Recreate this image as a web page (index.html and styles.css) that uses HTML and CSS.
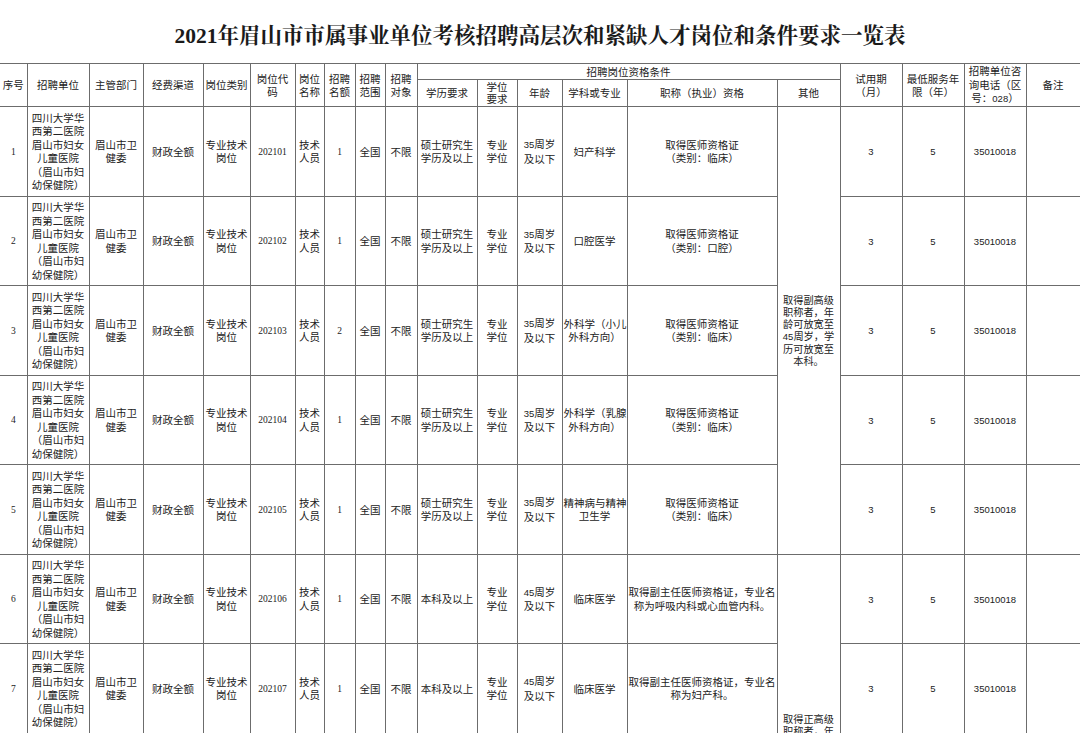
FILE: index.html
```html
<!DOCTYPE html>
<html lang="zh-CN">
<head>
<meta charset="utf-8">
<title>2021年眉山市市属事业单位考核招聘高层次和紧缺人才岗位和条件要求一览表</title>
<link rel="stylesheet" href="styles.css">
</head>
<body>
<div class="title">2021年眉山市市属事业单位考核招聘高层次和紧缺人才岗位和条件要求一览表</div>
<table class="sheet">
  <colgroup>
    <col class="c-no"><col class="c-unit"><col class="c-dept"><col class="c-fund"><col class="c-type">
    <col class="c-code"><col class="c-name"><col class="c-quota"><col class="c-range"><col class="c-target">
    <col class="c-edu"><col class="c-degree"><col class="c-age"><col class="c-major"><col class="c-title">
    <col class="c-other"><col class="c-trial"><col class="c-serve"><col class="c-tel"><col class="c-note">
  </colgroup>
  <thead>
    <tr class="h1">
      <th rowspan="2" class="first">序号</th>
      <th rowspan="2">招聘单位</th>
      <th rowspan="2">主管部门</th>
      <th rowspan="2">经费渠道</th>
      <th rowspan="2">岗位类别</th>
      <th rowspan="2">岗位代<br>码</th>
      <th rowspan="2">岗位<br>名称</th>
      <th rowspan="2">招聘<br>名额</th>
      <th rowspan="2">招聘<br>范围</th>
      <th rowspan="2">招聘<br>对象</th>
      <th colspan="6">招聘岗位资格条件</th>
      <th rowspan="2">试用期<br>（月）</th>
      <th rowspan="2">最低服务年<br>限（年）</th>
      <th rowspan="2">招聘单位咨<br>询电话（区<br>号：<span class="nd">028</span>）</th>
      <th rowspan="2">备注</th>
    </tr>
    <tr class="h2">
      <th>学历要求</th>
      <th class="tight">学位<br>要求</th>
      <th>年龄</th>
      <th>学科或专业</th>
      <th>职称（执业）资格</th>
      <th>其他</th>
    </tr>
  </thead>
  <tbody>
    <tr class="row">
      <td class="first"><span class="ns">1</span></td>
      <td>四川大学华<br>西第二医院<br>眉山市妇女<br>儿童医院<br>（眉山市妇<br>幼保健院）</td>
      <td>眉山市卫<br>健委</td>
      <td>财政全额</td>
      <td>专业技术<br>岗位</td>
      <td><span class="ns">202101</span></td>
      <td>技术<br>人员</td>
      <td><span class="ns">1</span></td>
      <td>全国</td>
      <td>不限</td>
      <td>硕士研究生<br>学历及以上</td>
      <td>专业<br>学位</td>
      <td><span class="nd">35</span>周岁<br>及以下</td>
      <td>妇产科学</td>
      <td>取得医师资格证<br>（类别：临床）</td>
      <td rowspan="5" class="other">取得副高级<br>职称者，年<br>龄可放宽至<br><span class="nd">45</span>周岁，学<br>历可放宽至<br>本科。</td>
      <td><span class="nd">3</span></td>
      <td><span class="nd">5</span></td>
      <td><span class="nd">35010018</span></td>
      <td></td>
    </tr>
    <tr class="row">
      <td class="first"><span class="ns">2</span></td>
      <td>四川大学华<br>西第二医院<br>眉山市妇女<br>儿童医院<br>（眉山市妇<br>幼保健院）</td>
      <td>眉山市卫<br>健委</td>
      <td>财政全额</td>
      <td>专业技术<br>岗位</td>
      <td><span class="ns">202102</span></td>
      <td>技术<br>人员</td>
      <td><span class="ns">1</span></td>
      <td>全国</td>
      <td>不限</td>
      <td>硕士研究生<br>学历及以上</td>
      <td>专业<br>学位</td>
      <td><span class="nd">35</span>周岁<br>及以下</td>
      <td>口腔医学</td>
      <td>取得医师资格证<br>（类别：口腔）</td>
      <td><span class="nd">3</span></td>
      <td><span class="nd">5</span></td>
      <td><span class="nd">35010018</span></td>
      <td></td>
    </tr>
    <tr class="row">
      <td class="first"><span class="ns">3</span></td>
      <td>四川大学华<br>西第二医院<br>眉山市妇女<br>儿童医院<br>（眉山市妇<br>幼保健院）</td>
      <td>眉山市卫<br>健委</td>
      <td>财政全额</td>
      <td>专业技术<br>岗位</td>
      <td><span class="ns">202103</span></td>
      <td>技术<br>人员</td>
      <td><span class="ns">2</span></td>
      <td>全国</td>
      <td>不限</td>
      <td>硕士研究生<br>学历及以上</td>
      <td>专业<br>学位</td>
      <td><span class="nd">35</span>周岁<br>及以下</td>
      <td>外科学（小儿<br>外科方向）</td>
      <td>取得医师资格证<br>（类别：临床）</td>
      <td><span class="nd">3</span></td>
      <td><span class="nd">5</span></td>
      <td><span class="nd">35010018</span></td>
      <td></td>
    </tr>
    <tr class="row">
      <td class="first"><span class="ns">4</span></td>
      <td>四川大学华<br>西第二医院<br>眉山市妇女<br>儿童医院<br>（眉山市妇<br>幼保健院）</td>
      <td>眉山市卫<br>健委</td>
      <td>财政全额</td>
      <td>专业技术<br>岗位</td>
      <td><span class="ns">202104</span></td>
      <td>技术<br>人员</td>
      <td><span class="ns">1</span></td>
      <td>全国</td>
      <td>不限</td>
      <td>硕士研究生<br>学历及以上</td>
      <td>专业<br>学位</td>
      <td><span class="nd">35</span>周岁<br>及以下</td>
      <td>外科学（乳腺<br>外科方向）</td>
      <td>取得医师资格证<br>（类别：临床）</td>
      <td><span class="nd">3</span></td>
      <td><span class="nd">5</span></td>
      <td><span class="nd">35010018</span></td>
      <td></td>
    </tr>
    <tr class="row">
      <td class="first"><span class="ns">5</span></td>
      <td>四川大学华<br>西第二医院<br>眉山市妇女<br>儿童医院<br>（眉山市妇<br>幼保健院）</td>
      <td>眉山市卫<br>健委</td>
      <td>财政全额</td>
      <td>专业技术<br>岗位</td>
      <td><span class="ns">202105</span></td>
      <td>技术<br>人员</td>
      <td><span class="ns">1</span></td>
      <td>全国</td>
      <td>不限</td>
      <td>硕士研究生<br>学历及以上</td>
      <td>专业<br>学位</td>
      <td><span class="nd">35</span>周岁<br>及以下</td>
      <td>精神病与精神<br>卫生学</td>
      <td>取得医师资格证<br>（类别：临床）</td>
      <td><span class="nd">3</span></td>
      <td><span class="nd">5</span></td>
      <td><span class="nd">35010018</span></td>
      <td></td>
    </tr>
    <tr class="row">
      <td class="first"><span class="ns">6</span></td>
      <td>四川大学华<br>西第二医院<br>眉山市妇女<br>儿童医院<br>（眉山市妇<br>幼保健院）</td>
      <td>眉山市卫<br>健委</td>
      <td>财政全额</td>
      <td>专业技术<br>岗位</td>
      <td><span class="ns">202106</span></td>
      <td>技术<br>人员</td>
      <td><span class="ns">1</span></td>
      <td>全国</td>
      <td>不限</td>
      <td>本科及以上</td>
      <td>专业<br>学位</td>
      <td><span class="nd">45</span>周岁<br>及以下</td>
      <td>临床医学</td>
      <td>取得副主任医师资格证，专业名<br>称为呼吸内科或心血管内科。</td>
      <td rowspan="4" class="other">取得正高级<br>职称者，年<br>龄可放宽至<br><span class="nd">50</span>周岁，学<br>历可放宽至<br>本科。</td>
      <td><span class="nd">3</span></td>
      <td><span class="nd">5</span></td>
      <td><span class="nd">35010018</span></td>
      <td></td>
    </tr>
    <tr class="row">
      <td class="first"><span class="ns">7</span></td>
      <td>四川大学华<br>西第二医院<br>眉山市妇女<br>儿童医院<br>（眉山市妇<br>幼保健院）</td>
      <td>眉山市卫<br>健委</td>
      <td>财政全额</td>
      <td>专业技术<br>岗位</td>
      <td><span class="ns">202107</span></td>
      <td>技术<br>人员</td>
      <td><span class="ns">1</span></td>
      <td>全国</td>
      <td>不限</td>
      <td>本科及以上</td>
      <td>专业<br>学位</td>
      <td><span class="nd">45</span>周岁<br>及以下</td>
      <td>临床医学</td>
      <td>取得副主任医师资格证，专业名<br>称为妇产科。</td>
      <td><span class="nd">3</span></td>
      <td><span class="nd">5</span></td>
      <td><span class="nd">35010018</span></td>
      <td></td>
    </tr>
    <tr class="row">
      <td class="first"><span class="ns">8</span></td>
      <td>四川大学华<br>西第二医院<br>眉山市妇女<br>儿童医院<br>（眉山市妇<br>幼保健院）</td>
      <td>眉山市卫<br>健委</td>
      <td>财政全额</td>
      <td>专业技术<br>岗位</td>
      <td><span class="ns">202108</span></td>
      <td>技术<br>人员</td>
      <td><span class="ns">1</span></td>
      <td>全国</td>
      <td>不限</td>
      <td>本科及以上</td>
      <td>专业<br>学位</td>
      <td><span class="nd">45</span>周岁<br>及以下</td>
      <td>临床医学</td>
      <td>取得副主任医师资格证</td>
      <td><span class="nd">3</span></td>
      <td><span class="nd">5</span></td>
      <td><span class="nd">35010018</span></td>
      <td></td>
    </tr>
    <tr class="row tall">
      <td class="first"><span class="ns">9</span></td>
      <td>四川大学华<br>西第二医院<br>眉山市妇女<br>儿童医院<br>（眉山市妇<br>幼保健院）</td>
      <td>眉山市卫<br>健委</td>
      <td>财政全额</td>
      <td>专业技术<br>岗位</td>
      <td><span class="ns">202109</span></td>
      <td>技术<br>人员</td>
      <td><span class="ns">1</span></td>
      <td>全国</td>
      <td>不限</td>
      <td>本科及以上</td>
      <td>专业<br>学位</td>
      <td><span class="nd">45</span>周岁<br>及以下</td>
      <td>临床医学</td>
      <td>取得副主任医师资格证</td>
      <td><span class="nd">3</span></td>
      <td><span class="nd">5</span></td>
      <td><span class="nd">35010018</span></td>
      <td></td>
    </tr>
  </tbody>
</table>
</body>
</html>
```

FILE: styles.css
```css
html, body {
  margin: 0;
  padding: 0;
  overflow: hidden;
  background: #ffffff;
}

body {
  width: 1080px;
  height: 733px;
  font-family: "Noto Sans CJK SC", sans-serif;
  color: #222222;
}

.title {
  height: 63px;
  box-sizing: border-box;
  padding-top: 3px;
  display: flex;
  align-items: center;
  justify-content: center;
  font-family: "Liberation Serif", "Noto Serif CJK SC", "Noto Sans CJK SC", serif;
  font-size: 21.5px;
  font-weight: 700;
  color: #1a1a1a;
  white-space: nowrap;
}

.sheet {
  border-collapse: collapse;
  table-layout: fixed;
  width: 1080px;
}

.sheet th,
.sheet td {
  border: 1px solid #6c6c6c;
  padding: 0 1px;
  text-align: center;
  vertical-align: middle;
  font-size: 10.5px;
  line-height: 13.5px;
  font-weight: 400;
  white-space: nowrap;
  overflow: hidden;
  color: #222222;
}

.sheet .first {
  border-left: none;
}

.h1 { height: 16px; }
.h2 { height: 27px; }
.sheet th.tight { line-height: 12px; }

.row { height: 89.5px; }
.row.tall { height: 122px; }

.sheet td.other {
  font-size: 10.2px;
  line-height: 12px;
}

.ns {
  font-family: "Liberation Serif", serif;
  font-size: 9.5px;
}

.nd {
  font-family: "Liberation Sans", sans-serif;
  font-size: 9.5px;
}

.c-no { width: 27px; }
.c-unit { width: 62px; }
.c-dept { width: 54px; }
.c-fund { width: 60px; }
.c-type { width: 47px; }
.c-code { width: 45px; }
.c-name { width: 29px; }
.c-quota { width: 31px; }
.c-range { width: 30px; }
.c-target { width: 32px; }
.c-edu { width: 60px; }
.c-degree { width: 40px; }
.c-age { width: 45px; }
.c-major { width: 65px; }
.c-title { width: 150px; }
.c-other { width: 63px; }
.c-trial { width: 62px; }
.c-serve { width: 62px; }
.c-tel { width: 62px; }
.c-note { width: 54px; }
```
